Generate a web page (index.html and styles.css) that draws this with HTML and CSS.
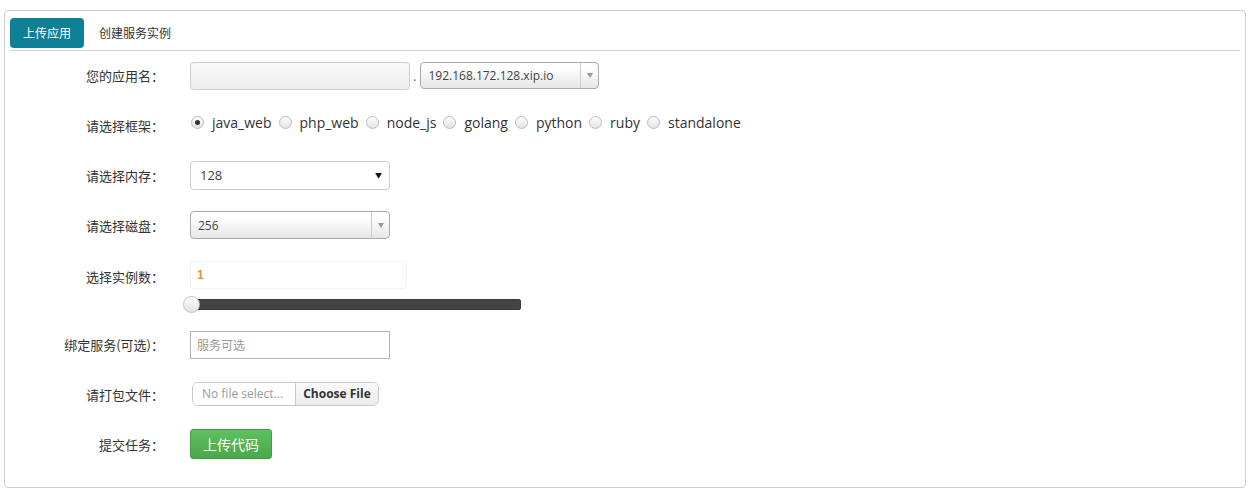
FILE: index.html
```html
<!DOCTYPE html>
<html lang="zh">
<head>
<meta charset="utf-8">
<title>上传应用</title>
<link rel="stylesheet" href="styles.css">
</head>
<body>
<div class="panel">
  <div class="tabs">
    <span class="tab active">上传应用</span>
    <span class="tab">创建服务实例</span>
  </div>
  <form class="form">
    <div class="row row-first">
      <label class="lbl">您的应用名：</label>
      <div class="ctl">
        <span class="text-in grey"></span>
        <span class="dot">.</span>
        <span class="sel chosen domain"><span class="sel-val">192.168.172.128.xip.io</span><span class="sel-arrow"><span class="tri"></span></span></span>
      </div>
    </div>
    <div class="row">
      <label class="lbl">请选择框架：</label>
      <div class="ctl radios">
        <span class="radio checked"></span><span class="rlab">java_web</span>
        <span class="radio"></span><span class="rlab">php_web</span>
        <span class="radio"></span><span class="rlab">node_js</span>
        <span class="radio"></span><span class="rlab">golang</span>
        <span class="radio"></span><span class="rlab">python</span>
        <span class="radio"></span><span class="rlab">ruby</span>
        <span class="radio"></span><span class="rlab">standalone</span>
      </div>
    </div>
    <div class="row">
      <label class="lbl">请选择内存：</label>
      <div class="ctl">
        <span class="sel plain"><span class="sel-val">128</span><span class="plain-arrow">▼</span></span>
      </div>
    </div>
    <div class="row">
      <label class="lbl">请选择磁盘：</label>
      <div class="ctl">
        <span class="sel chosen disk"><span class="sel-val">256</span><span class="sel-arrow"><span class="tri"></span></span></span>
      </div>
    </div>
    <div class="row row-slider">
      <label class="lbl">选择实例数：</label>
      <div class="ctl slider-ctl">
        <div class="count">1</div>
        <div class="track"><span class="thumb"></span></div>
      </div>
    </div>
    <div class="row">
      <label class="lbl">绑定服务(可选)：</label>
      <div class="ctl">
        <span class="svc">服务可选</span>
      </div>
    </div>
    <div class="row">
      <label class="lbl">请打包文件：</label>
      <div class="ctl">
        <span class="file"><span class="file-name">No file select...</span><span class="file-btn">Choose File</span></span>
      </div>
    </div>
    <div class="row">
      <label class="lbl">提交任务：</label>
      <div class="ctl">
        <span class="btn-ok">上传代码</span>
      </div>
    </div>
  </form>
</div>
</body>
</html>
```

FILE: styles.css
```css
* { box-sizing: border-box; }
html, body { margin: 0; background: #fff; }
body {
  font-family: "Open Sans", "Noto Sans CJK SC", sans-serif;
  color: #333;
  font-size: 13px;
}
.panel {
  margin: 10px 14px 0 4px;
  width: 1242px;
  height: 478px;
  border: 1px solid #cfcfcf;
  border-radius: 4px;
  padding: 7px 5px 0 5px;
}
.tabs {
  display: flex;
  align-items: center;
  border-bottom: 1px solid #d0d0d0;
  padding-bottom: 2px;
}
.tab {
  height: 30px;
  line-height: 30px;
  padding: 0 13px;
  font-size: 12px;
  color: #333;
  font-family: "Noto Sans CJK SC", sans-serif;
  border-radius: 4px;
  margin-right: 2px;
}
.tab.active {
  background: #0f7f95;
  color: #fff;
}
.form { display: flex; flex-direction: column; }
.row {
  display: flex;
  align-items: center;
  height: 50px;
}
.row-first { height: 49px; }
.lbl {
  width: 154px;
  text-align: right;
  margin-right: 26px;
  font-family: "Noto Sans CJK SC", sans-serif;
  font-size: 13px;
  color: #333;
  flex: none;
}
.ctl { display: flex; align-items: center; }
.text-in {
  width: 220px;
  height: 28px;
  border: 1px solid #ccc;
  border-radius: 4px;
}
.text-in.grey { background: linear-gradient(#f8f8f8, #eeeeee); }
.dot { margin: 0 4px 0 3px; color: #666; font-size: 13px; }
.sel {
  display: flex;
  align-items: center;
  height: 27px;
  border: 1px solid #aaa;
  border-radius: 4px;
  font-size: 12px;
  color: #444;
}
.sel.chosen { background: linear-gradient(#ffffff 20%, #f3f3f3 60%, #e6e6e6); }
.sel .sel-val { flex: 1; padding-left: 7px; }
.sel-arrow {
  width: 18px;
  align-self: stretch;
  border-left: 1px solid #ccc;
  display: flex;
  align-items: center;
  justify-content: center;
}
.tri {
  width: 0; height: 0;
  border-left: 3px solid transparent;
  border-right: 3px solid transparent;
  border-top: 5px solid #999;
}
.domain { width: 179px; }
.disk { width: 200px; height: 28px; }
.plain {
  width: 200px;
  height: 29px;
  background: #fff;
  border-color: #ccc;
  font-size: 13px;
}
.plain .sel-val { padding-left: 9px; }
.plain-arrow { font-size: 7px; color: #111; margin-right: 7px; }
.radios { font-size: 14px; color: #333; margin-top: -5px; }
.radio {
  width: 13px;
  height: 13px;
  border-radius: 50%;
  border: 1px solid #bcbcbc;
  background: linear-gradient(#fdfdfd, #e3e3e3);
  display: inline-flex;
  align-items: center;
  justify-content: center;
  margin-left: 1px;
}
.radio.checked::after {
  content: "";
  width: 5px;
  height: 5px;
  border-radius: 50%;
  background: #333;
}
.rlab { margin: 0 6px 0 8px; }
.row-slider { height: 69px; align-items: flex-start; }
.row-slider .lbl { margin-top: 17px; }
.slider-ctl { flex-direction: column; align-items: flex-start; padding-top: 11px; }
.count {
  width: 217px;
  height: 28px;
  border: 1px solid #f3f3f3;
  border-radius: 3px;
  color: #e8922b;
  font-weight: bold;
  font-size: 12px;
  padding: 6px 0 0 6px;
  font-family: "Liberation Sans", sans-serif;
}
.track {
  position: relative;
  width: 331px;
  height: 11px;
  margin-top: 10px;
  background: #444;
  border: 1px solid #3a3a3a;
  border-radius: 2px;
}
.thumb {
  position: absolute;
  left: -8px;
  top: -4px;
  width: 17px;
  height: 17px;
  border-radius: 50%;
  background: linear-gradient(#ffffff, #e2e2e2);
  border: 1px solid #c2c2c2;
}
.svc {
  width: 200px;
  height: 28px;
  border: 1px solid #b4b4b4;
  color: #999;
  font-family: "Noto Sans CJK SC", sans-serif;
  font-size: 12px;
  padding-left: 6px;
  line-height: 26px;
  margin-top: 1px;
}
.file {
  display: flex;
  margin-left: 2px;
  height: 24px;
  border: 1px solid #c8c8c8;
  border-radius: 6px;
  overflow: hidden;
  font-size: 12px;
}
.file-name {
  width: 102px;
  color: #999;
  padding-left: 9px;
  line-height: 22px;
  background: #fff;
}
.file-btn {
  width: 83px;
  border-left: 1px solid #c8c8c8;
  background: linear-gradient(#fafafa, #ececec);
  font-weight: bold;
  color: #333;
  text-align: center;
  line-height: 22px;
}
.btn-ok {
  width: 82px;
  height: 30px;
  line-height: 28px;
  text-align: center;
  color: #fff;
  font-family: "Noto Sans CJK SC", sans-serif;
  font-size: 14px;
  border: 1px solid #469b46;
  border-radius: 3px;
  background: linear-gradient(#5ec05e, #4aa84a);
}
```
